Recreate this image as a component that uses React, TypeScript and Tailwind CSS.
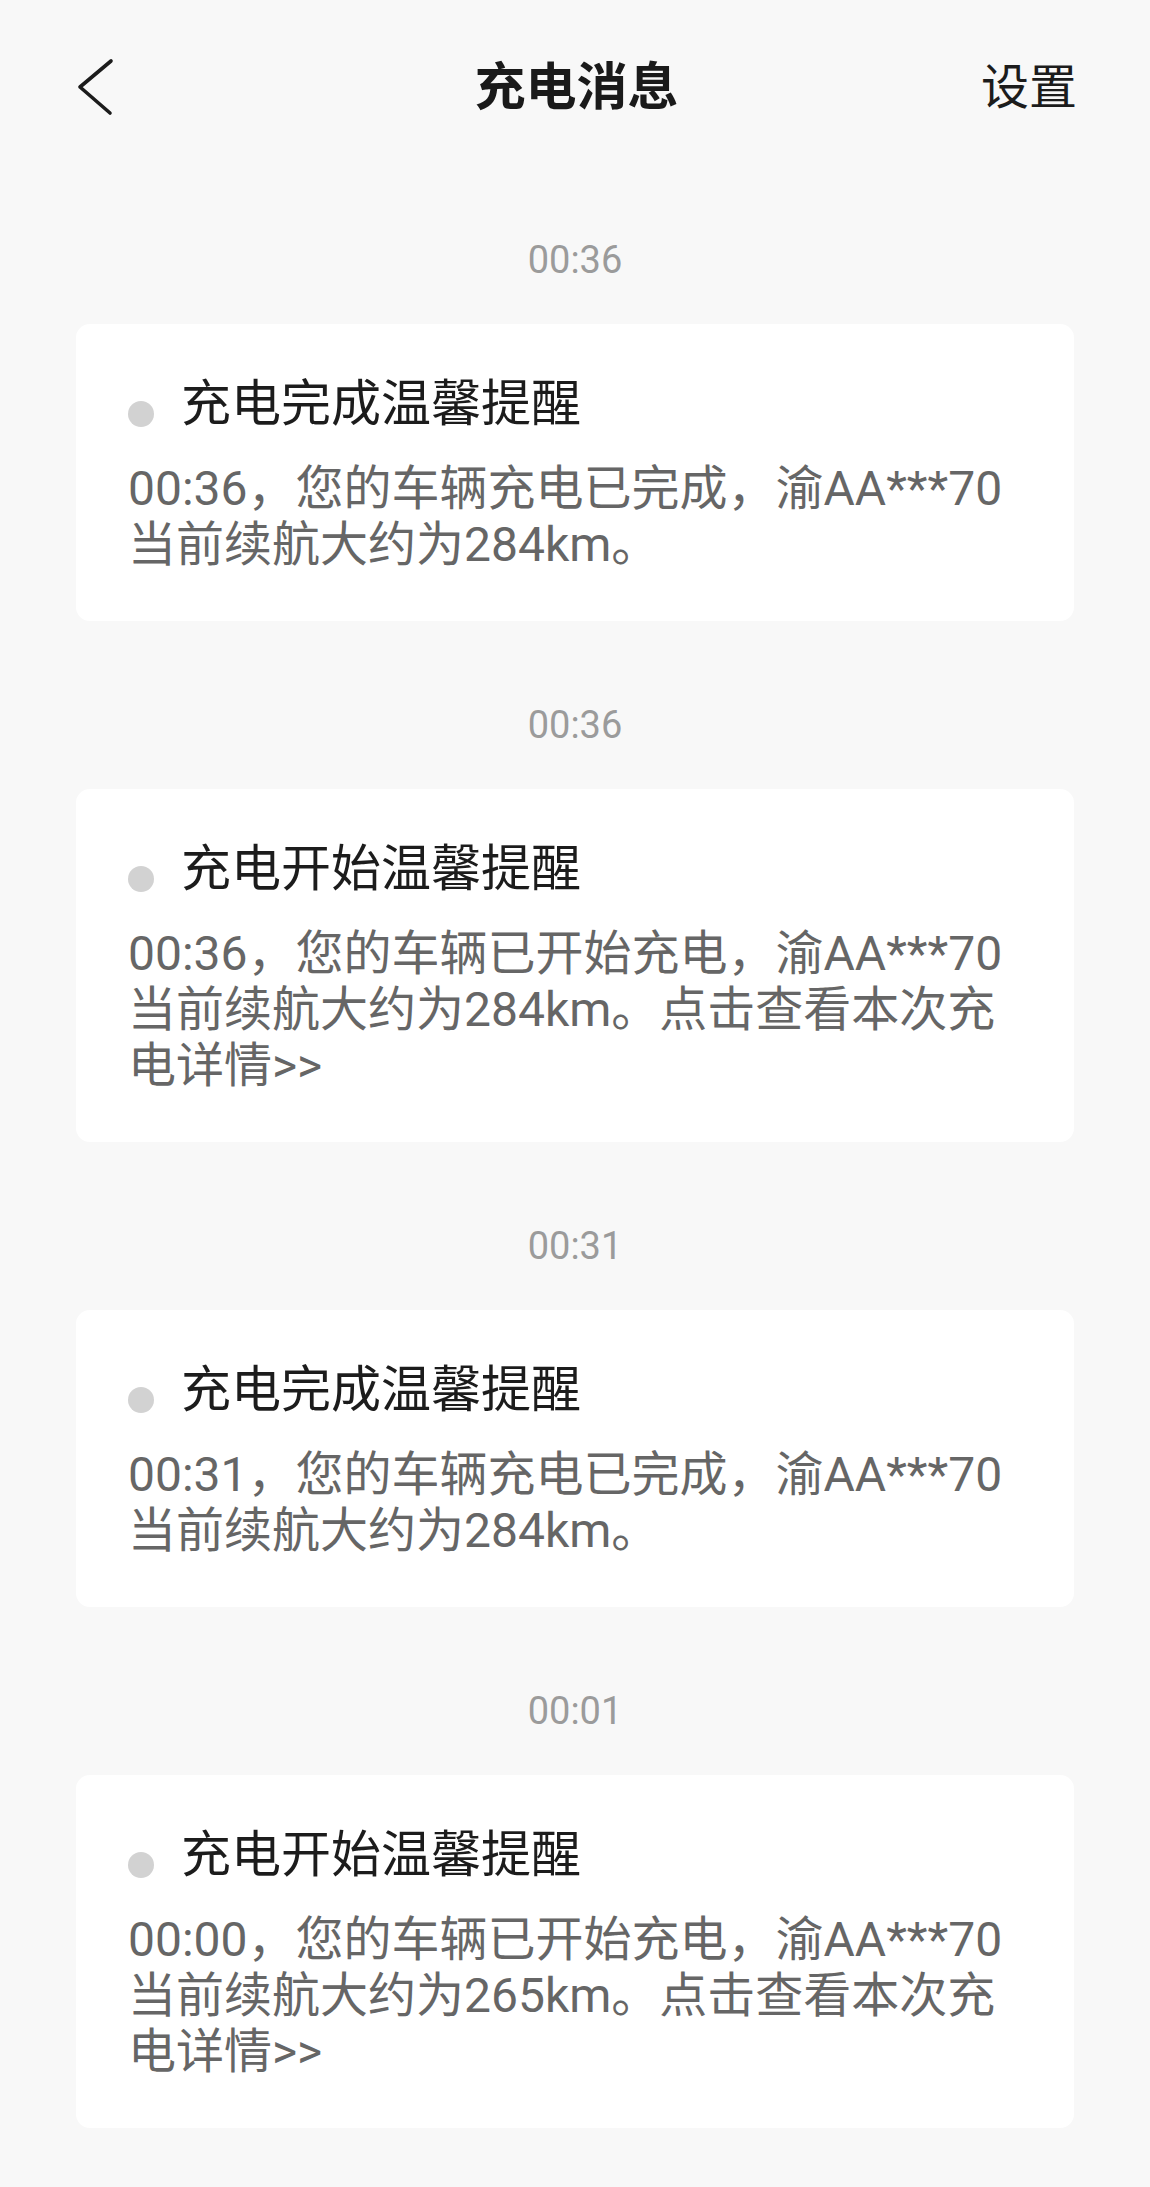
import React from 'react';

interface Mensaje {
  id: number;
  hora: string;
  titulo: string;
  texto: string;
}

const mensajes: Mensaje[] = [
  {
    id: 1,
    hora: '00:36',
    titulo: '充电完成温馨提醒',
    texto: '00:36，您的车辆充电已完成，渝AA***70当前续航大约为284km。',
  },
  {
    id: 2,
    hora: '00:36',
    titulo: '充电开始温馨提醒',
    texto: '00:36，您的车辆已开始充电，渝AA***70当前续航大约为284km。点击查看本次充电详情>>',
  },
  {
    id: 3,
    hora: '00:31',
    titulo: '充电完成温馨提醒',
    texto: '00:31，您的车辆充电已完成，渝AA***70当前续航大约为284km。',
  },
  {
    id: 4,
    hora: '00:01',
    titulo: '充电开始温馨提醒',
    texto: '00:00，您的车辆已开始充电，渝AA***70当前续航大约为265km。点击查看本次充电详情>>',
  },
];

const fontStack = { fontFamily: 'Roboto, "Noto Sans CJK SC", sans-serif' };

const MensajeItem: React.FC<{ mensaje: Mensaje; first: boolean }> = ({ mensaje, first }) => (
  <div className={first ? '' : 'mt-[80px]'}>
    <div className="h-[48px] leading-[48px] text-center text-[38px] text-[#9b9b9b]">{mensaje.hora}</div>
    <div className="mt-[40px] bg-white rounded-[14px] px-[52px] pt-[52px] pb-[48px]">
      <div className="flex items-start">
        <div className="mt-[25px] w-[26px] h-[26px] rounded-full bg-[#d2d2d2] shrink-0" />
        <div className="ml-[27px] text-[50px] leading-[56px] text-[#1c1c1c]">{mensaje.titulo}</div>
      </div>
      <div className="mt-[29px] text-[48px] leading-[56px] text-[#666666] break-words">{mensaje.texto}</div>
    </div>
  </div>
);

export default function App() {
  return (
    <div className="min-h-screen w-[1150px] bg-[#f8f8f8]" style={fontStack}>
      <div className="h-[176px] pl-[76px] pr-[73px] grid grid-cols-3 items-center">
        <div className="flex items-center">
          <svg width="40" height="60" viewBox="0 0 40 60" fill="none">
            <path
              d="M35 3 L4 29 L34 55"
              stroke="#1c1c1c"
              strokeWidth="3.6"
              strokeLinecap="round"
              strokeLinejoin="round"
            />
          </svg>
        </div>
        <div className="text-center text-[51px] font-bold text-[#1a1a1a] whitespace-nowrap">充电消息</div>
        <div className="text-right text-[48px] text-[#1c1c1c]">设置</div>
      </div>
      <div className="px-[76px] pt-[60px] pb-[60px]">
        {mensajes.map((m, i) => (
          <MensajeItem key={m.id} mensaje={m} first={i === 0} />
        ))}
      </div>
    </div>
  );
}
